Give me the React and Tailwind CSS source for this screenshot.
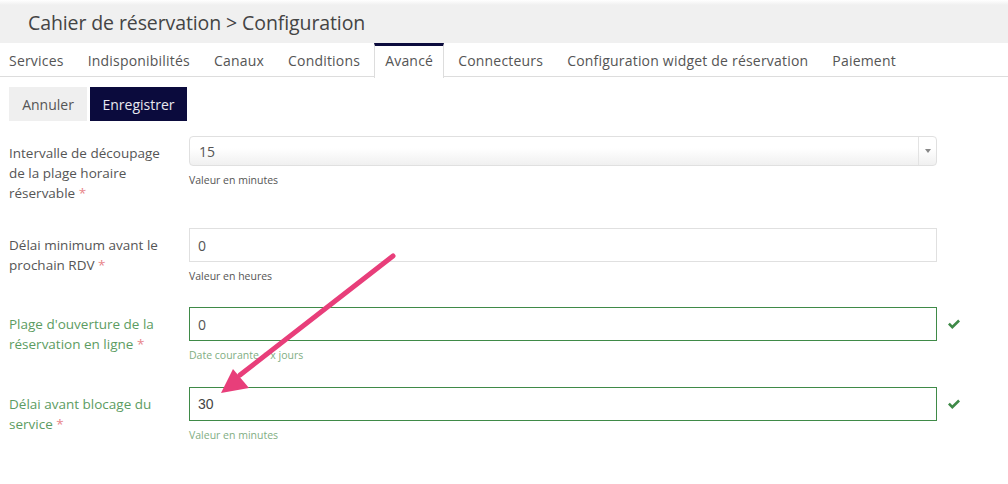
const tabs = [
  "Services",
  "Indisponibilités",
  "Canaux",
  "Conditions",
  "Avancé",
  "Connecteurs",
  "Configuration widget de réservation",
  "Paiement",
];

function Label({ children, valid }) {
  return (
    <div
      className={`w-[189px] shrink-0 pr-[16px] pl-[9px] pt-[7px] text-[13.5px] leading-[20px] ${
        valid ? "text-[#5c9c62]" : "text-[#555]"
      }`}
    >
      {children} <span className="text-[#e8858a]">*</span>
    </div>
  );
}

function Help({ children, valid }) {
  return (
    <p
      className={`mt-[7px] text-[10.5px] leading-[15px] ${
        valid ? "text-[#7fae83]" : "text-[#555]"
      }`}
    >
      {children}
    </p>
  );
}

function CheckMark() {
  return (
    <svg viewBox="0 0 14 11" className="w-[14px] h-[11px]">
      <path
        d="M1 5.6 L2.8 3.8 L5.3 6.3 L11.2 0.6 L13 2.4 L5.3 10 Z"
        fill="#3f8a48"
      />
    </svg>
  );
}

export default function App() {
  return (
    <div className="relative w-full h-[484px] bg-white overflow-hidden font-['Open_Sans',sans-serif] text-[#555]">
      {/* header */}
      <div className="h-[43px] bg-[linear-gradient(to_bottom,#ffffff_0px,#f0f0f0_5px,#f0f0f0_100%)] flex items-center pl-[28px] pt-[2px]">
        <h1 className="text-[19.5px] text-[#444] tracking-[-0.1px]">
          Cahier de réservation &gt; Configuration
        </h1>
      </div>

      {/* tabs */}
      <div className="flex border-b border-[#ddd] h-[34px] -ml-px">
        {tabs.map((t) => (
          <div
            key={t}
            className={`mr-[4px] h-[34px] px-[10px] flex items-center text-[14px] tracking-[0.2px] ${
              t === "Avancé"
                ? "border-t-[3px] border-t-[#0b0b3d] border-x border-x-[#ddd] bg-white h-[35px] pb-[3px] px-[9px]"
                : "text-[#555]"
            }`}
          >
            {t}
          </div>
        ))}
      </div>

      {/* actions */}
      <div className="flex gap-[3px] pl-[9px] mt-[10px]">
        <button className="h-[34px] w-[78px] bg-[#efefef] text-[14px] text-[#555]">
          Annuler
        </button>
        <button className="h-[34px] w-[97px] bg-[#0b0b3d] text-[14px] text-[#e8e8f0]">
          Enregistrer
        </button>
      </div>

      {/* form */}
      <div className="mt-[15px] flex flex-col">
        <div className="flex mb-[25px]">
          <Label>Intervalle de découpage de la plage horaire réservable</Label>
          <div className="w-[748px]">
            <div className="h-[30px] rounded-[4px] border border-[#e0e0e0] bg-[linear-gradient(to_bottom,#ffffff_40%,#f0f0f0_100%)] flex items-center">
              <span className="flex-1 pl-[9px] text-[14px] text-[#555]">15</span>
              <span className="w-[18px] h-full border-l border-[#e3e3e3] flex items-center justify-center">
                <svg viewBox="0 0 6 4" className="w-[6px] h-[4px]">
                  <path d="M0 0 H6 L3 4 Z" fill="#888" />
                </svg>
              </span>
            </div>
            <Help>Valeur en minutes</Help>
          </div>
        </div>

        <div className="flex mb-[23px]">
          <Label>Délai minimum avant le prochain RDV</Label>
          <div className="w-[748px]">
            <div className="h-[34px] border border-[#e0e0e0] flex items-center pl-[8px] text-[14px] text-[#555]">
              0
            </div>
            <Help>Valeur en heures</Help>
          </div>
        </div>

        <div className="flex mb-[24px]">
          <Label valid>Plage d'ouverture de la réservation en ligne</Label>
          <div className="w-[748px]">
            <div className="h-[34px] border border-[#3f8a48] flex items-center pl-[8px] text-[14px] text-[#555]">
              0
            </div>
            <Help valid>Date courante + x jours</Help>
          </div>
          <div className="h-[34px] pl-[10px] flex items-center">
            <CheckMark />
          </div>
        </div>

        <div className="flex">
          <Label valid>Délai avant blocage du service</Label>
          <div className="w-[748px]">
            <div className="h-[34px] border border-[#3f8a48] flex items-center pl-[8px] text-[14px] text-[#444] font-['Liberation_Sans',sans-serif]">
              30
            </div>
            <Help valid>Valeur en minutes</Help>
          </div>
          <div className="h-[34px] pl-[10px] flex items-center">
            <CheckMark />
          </div>
        </div>
      </div>

      {/* annotation arrow */}
      <svg
        className="absolute inset-0 pointer-events-none"
        width="1008"
        height="484"
        viewBox="0 0 1008 484"
      >
        <line
          x1="393"
          y1="256"
          x2="240"
          y2="375"
          stroke="#e83e7a"
          strokeWidth="5"
          strokeLinecap="round"
        />
        <path d="M221 393 L233 369 L249 388 Z" fill="#e83e7a" />
      </svg>
    </div>
  );
}
